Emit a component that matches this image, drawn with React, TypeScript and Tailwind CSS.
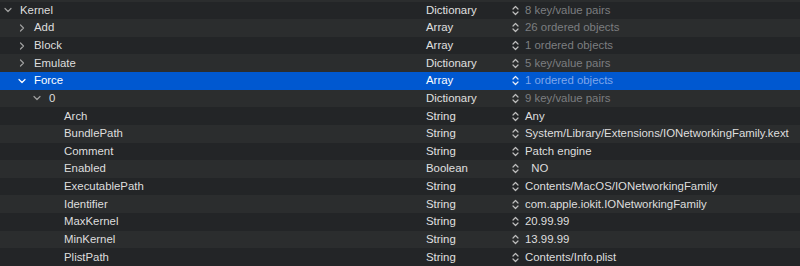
import React from "react";

type Row = {
  key: string;
  depth: number;
  chevron?: "open" | "closed";
  type: string;
  value: string;
  dim?: boolean;
  selected?: boolean;
};

const rows: Row[] = [
  { key: "Kernel", depth: 0, chevron: "open", type: "Dictionary", value: "8 key/value pairs", dim: true },
  { key: "Add", depth: 1, chevron: "closed", type: "Array", value: "26 ordered objects", dim: true },
  { key: "Block", depth: 1, chevron: "closed", type: "Array", value: "1 ordered objects", dim: true },
  { key: "Emulate", depth: 1, chevron: "closed", type: "Dictionary", value: "5 key/value pairs", dim: true },
  { key: "Force", depth: 1, chevron: "open", type: "Array", value: "1 ordered objects", dim: true, selected: true },
  { key: "0", depth: 2, chevron: "open", type: "Dictionary", value: "9 key/value pairs", dim: true },
  { key: "Arch", depth: 3, type: "String", value: "Any" },
  { key: "BundlePath", depth: 3, type: "String", value: "System/Library/Extensions/IONetworkingFamily.kext" },
  { key: "Comment", depth: 3, type: "String", value: "Patch engine" },
  { key: "Enabled", depth: 3, type: "Boolean", value: "\u00a0\u00a0NO" },
  { key: "ExecutablePath", depth: 3, type: "String", value: "Contents/MacOS/IONetworkingFamily" },
  { key: "Identifier", depth: 3, type: "String", value: "com.apple.iokit.IONetworkingFamily" },
  { key: "MaxKernel", depth: 3, type: "String", value: "20.99.99" },
  { key: "MinKernel", depth: 3, type: "String", value: "13.99.99" },
  { key: "PlistPath", depth: 3, type: "String", value: "Contents/Info.plist" },
];

const indents = ["pl-[4px]", "pl-[18px]", "pl-[33px]", "pl-[64px]"];

function Chevron({ open, light }: { open: boolean; light?: boolean }) {
  return (
    <svg width="8" height="8" viewBox="0 0 8 8" className="shrink-0">
      <path
        d={open ? "M1 2.5 L4 5.5 L7 2.5" : "M2.5 1 L5.5 4 L2.5 7"}
        fill="none"
        stroke={light ? "#ffffff" : "#a0a0a0"}
        strokeWidth="1.2"
        strokeLinecap="round"
        strokeLinejoin="round"
      />
    </svg>
  );
}

function Stepper({ light }: { light?: boolean }) {
  return (
    <svg width="7" height="11" viewBox="0 0 7 11" className="shrink-0">
      <path
        d="M1 4 L3.5 1.5 L6 4 M1 7 L3.5 9.5 L6 7"
        fill="none"
        stroke={light ? "#e6ecf8" : "#bdbdbd"}
        strokeWidth="1.2"
        strokeLinecap="round"
        strokeLinejoin="round"
      />
    </svg>
  );
}

export default function App() {
  return (
    <div
      className="w-[800px] h-[266px] overflow-hidden bg-[#2b2d2e] text-[11.4px] text-[#dedede]"
      style={{ fontFamily: '"Liberation Sans", Arial, sans-serif' }}
    >
      <div className="h-[1.5px] bg-[#2b2d2e]" />
      {rows.map((r, i) => {
        const bg = r.selected ? "bg-[#0058d0]" : i % 2 === 0 ? "bg-[#232527]" : "bg-[#2b2d2e]";
        return (
          <div key={i} className={`flex items-center h-[17.63px] ${bg}`}>
            <div className={`w-[426px] flex items-center ${indents[r.depth]}`}>
              {r.chevron && (
                <span className="w-[16px] flex items-center">
                  <Chevron open={r.chevron === "open"} light={r.selected} />
                </span>
              )}
              <span className={r.selected ? "text-white" : ""}>{r.key}</span>
            </div>
            <div className={`w-[86px] ${r.selected ? "text-white" : "text-[#e0e0e0]"}`}>{r.type}</div>
            <div className="flex items-center gap-[6px]">
              <Stepper light={r.selected} />
              <span
                className={
                  r.selected
                    ? "text-[#7fa6ea]"
                    : r.dim
                    ? "text-[#7c7e80]"
                    : "text-[#dedede]"
                }
              >
                {r.value}
              </span>
            </div>
          </div>
        );
      })}
    </div>
  );
}
